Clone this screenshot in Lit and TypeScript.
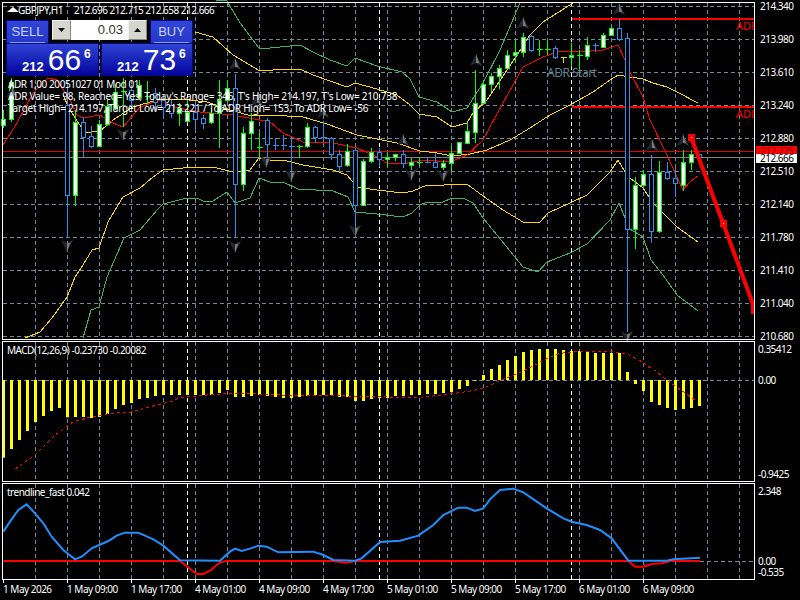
import { LitElement, html, svg, css } from 'lit';
import { customElement } from 'lit/decorators.js';

type Pt = [number, number];
// i, kind (b bull, s bear, g/h/y doji), body top, body bottom, wick top, wick bottom
type Bar = [number, string, number, number, number, number];

const barX = (i: number) => 3.5 + 8 * i;
const pts = (list: Pt[]) => list.map((p) => p.join(',')).join(' ');
const zoomed = (list: Pt[], ox: number, oy: number): Pt[] =>
  list.map(([x, y]) => [ox + x / 3, oy + y / 3] as Pt);

const BARS: Bar[] = [
  [0, 'b', 119, 125, 110, 128], [1, 'b', 82, 119, 78, 122],
  [8, 's', 105, 195, 80, 238], [9, 'b', 122, 195, 110, 206], [10, 's', 122, 137, 117, 157],
  [11, 's', 136, 146, 126, 148], [12, 'b', 124, 146, 120, 147], [13, 'b', 106, 124, 100, 126],
  [14, 'b', 92, 108, 84, 110], [15, 'g', 91, 91, 78, 127], [16, 's', 90, 100, 85, 107],
  [17, 'b', 85, 97, 80, 100], [18, 'g', 96, 96, 81, 104], [19, 's', 93, 102, 88, 110],
  [20, 's', 100, 107, 95, 118], [21, 's', 105, 113, 100, 118], [22, 'b', 108, 113, 103, 126],
  [23, 'b', 112, 121, 100, 123], [24, 's', 112, 119, 103, 131], [25, 's', 118, 123, 115, 129],
  [26, 'b', 113, 122, 108, 124], [27, 'b', 100, 113, 80, 148], [28, 'b', 88, 100, 80, 101],
  [29, 's', 88, 184, 74, 238], [30, 'b', 133, 184, 127, 191], [31, 'b', 121, 133, 113, 150],
  [32, 'g', 147, 147, 133, 157], [33, 's', 120, 144, 118, 157], [34, 'h', 145, 145, 138, 150],
  [35, 'h', 145, 145, 135, 150], [36, 'h', 146, 146, 138, 172], [37, 'g', 146, 146, 145, 157],
  [38, 'b', 127, 146, 123, 148], [39, 's', 127, 137, 126, 143], [40, 'h', 137, 137, 121, 142],
  [41, 's', 138, 154, 137, 160], [42, 's', 154, 166, 150, 172], [43, 'b', 151, 165, 144, 167],
  [44, 's', 150, 205, 148, 227], [45, 'b', 161, 205, 159, 206], [46, 'b', 152, 161, 148, 163],
  [47, 's', 152, 159, 148, 167], [48, 'b', 157, 159, 152, 167], [49, 'b', 154, 157, 154, 161],
  [50, 's', 154, 163, 150, 168], [51, 'b', 162, 165, 158, 170], [52, 'g', 162, 162, 157, 165],
  [53, 'h', 162, 162, 158, 163], [54, 's', 162, 167, 153, 168], [55, 'b', 163, 167, 160, 170],
  [56, 'b', 153, 163, 146, 172], [57, 'b', 142, 153, 142, 154], [58, 'b', 131, 143, 123, 143],
  [59, 'b', 103, 132, 70, 143], [60, 'b', 84, 103, 80, 104], [61, 'b', 76, 84, 73, 92],
  [62, 'b', 68, 76, 65, 89], [63, 'b', 55, 68, 50, 69], [64, 'b', 52, 55, 40, 63],
  [65, 'b', 37, 52, 33, 57], [66, 's', 36, 50, 35, 52], [67, 'g', 49, 49, 40, 56],
  [68, 'g', 49, 49, 40, 55], [69, 's', 48, 57, 46, 59], [70, 'y', 57, 57, 57, 63],
  [71, 'b', 55, 57, 43, 67], [72, 'g', 55, 55, 50, 72], [73, 'b', 45, 56, 37, 60],
  [74, 'h', 45, 45, 43, 52], [75, 'b', 35, 47, 33, 48], [76, 'b', 28, 35, 26, 36],
  [77, 's', 28, 39, 19, 41], [78, 's', 38, 229, 33, 332], [79, 'b', 185, 229, 177, 249],
  [80, 'b', 174, 185, 170, 186], [81, 's', 174, 231, 155, 243], [82, 'b', 172, 231, 161, 233],
  [83, 's', 172, 178, 162, 180], [84, 's', 178, 183, 168, 197], [85, 'b', 162, 185, 150, 191],
  [86, 'b', 154, 162, 150, 170], [87, 's', 154, 157, 154, 158],
];

const GREEN_UP: Pt[] = [[195, -2], [227, 1], [240, 23], [259, 48], [270, 48], [300, 45], [313, 52], [330, 60], [347, 66], [355, 58], [377, 66], [402, 72], [410, 79], [419, 97], [437, 102], [452, 112], [467, 108], [483, 83], [500, 50], [520, 3], [522, 2]];
const YELLOW_UP: Pt[] = [[195, 32], [213, 37], [233, 55], [260, 71], [287, 69], [300, 69], [313, 75], [347, 87], [355, 83], [377, 89], [397, 95], [410, 105], [419, 114], [437, 117], [452, 127], [467, 123], [473, 113], [487, 100], [517, 55], [530, 35], [543, 22], [573, 3]];
const RED_MID: Pt[] = [[3, 145], [17, 123], [33, 93], [48, 78], [57, 80], [70, 100], [77, 115], [83, 118], [100, 115], [113, 123], [123, 127], [140, 107], [160, 100], [173, 107], [200, 112], [233, 115], [270, 122], [283, 133], [303, 142], [333, 143], [357, 148], [377, 157], [387, 163], [407, 163], [423, 160], [450, 162], [467, 155], [483, 140], [503, 103], [523, 67], [543, 57], [560, 51], [580, 52], [603, 50], [618, 45], [625, 60], [630, 72], [643, 97], [650, 120], [667, 155], [677, 177], [683, 190], [690, 182], [698, 176]];
const YELLOW_MID: Pt[] = [[63, 95], [70, 110], [85, 133], [100, 131], [113, 120], [133, 107], [157, 100], [180, 99], [207, 102], [230, 110], [248, 115], [270, 115], [303, 117], [327, 124], [357, 135], [397, 143], [420, 151], [437, 153], [452, 156], [470, 154], [487, 150], [510, 140], [530, 128], [550, 115], [570, 105], [593, 92], [610, 80], [618, 75], [630, 77], [643, 79], [653, 83], [667, 87], [677, 92], [698, 103]];
const YELLOW_LOW: Pt[] = [[25, 338], [40, 332], [52, 318], [67, 297], [75, 277], [83, 265], [92, 250], [99, 248], [108, 222], [123, 197], [140, 188], [153, 177], [163, 170], [193, 167], [213, 167], [233, 172], [250, 170], [259, 158], [270, 160], [287, 161], [303, 165], [333, 170], [347, 175], [357, 187], [377, 190], [403, 193], [413, 191], [427, 185], [437, 186], [452, 184], [467, 184], [483, 196], [503, 210], [523, 222], [540, 222], [548, 213], [570, 203], [587, 195], [610, 172], [618, 160], [625, 172], [630, 178], [643, 188], [653, 203], [663, 213], [677, 227], [698, 242]];
const GREEN_LOW: Pt[] = [[83, 338], [91, 310], [99, 307], [107, 277], [124, 238], [140, 230], [157, 210], [163, 204], [187, 198], [197, 198], [203, 201], [213, 201], [227, 192], [235, 203], [250, 198], [259, 178], [270, 182], [283, 182], [298, 189], [333, 191], [348, 197], [355, 212], [377, 214], [403, 217], [412, 213], [420, 205], [427, 202], [443, 202], [452, 198], [463, 198], [473, 203], [483, 218], [497, 235], [523, 267], [538, 272], [547, 262], [570, 253], [587, 244], [610, 220], [619, 203], [625, 218], [630, 229], [643, 237], [651, 260], [663, 275], [677, 295], [698, 311]];

const ARROWS_UP: Pt[] = [[235, 64], [257, 100], [323, 112], [403, 140], [476, 60], [523, 23], [619, 9], [652, 145], [683, 140], [12, 92]];
const ARROWS_DOWN: Pt[] = [[123, 135], [67, 246], [235, 247], [266, 162], [291, 176], [355, 231], [411, 175], [443, 176], [627, 337]];

// histogram ends in zoomed px of the MACD pane, zero at 120
const MACD_END = [353, 327, 300, 273, 246, 228, 213, 204, 232, 231, 231, 234, 231, 222, 207, 195, 189, 177, 174, 168, 165, 165, 165, 165, 165, 165, 165, 159, 150, 171, 171, 168, 165, 168, 171, 174, 174, 171, 168, 165, 165, 165, 171, 171, 183, 183, 177, 174, 174, 168, 168, 165, 165, 162, 162, 159, 156, 147, 138, 122, 105, 87, 75, 60, 48, 36, 30, 27, 27, 27, 30, 33, 33, 36, 39, 39, 39, 39, 96, 132, 153, 186, 195, 204, 210, 207, 204, 198];
const SIGNAL: Pt[] = [
  ...zoomed([[45, 387], [105, 345], [165, 285], [220, 245], [270, 232], [330, 220], [390, 217], [450, 200], [520, 183], [540, 173], [620, 165], [700, 160], [800, 163], [880, 167], [1000, 167], [1200, 172]], 0, 340),
  ...zoomed([[60, 172], [130, 165], [200, 155], [250, 145], [300, 122], [350, 102], [400, 78], [430, 60], [480, 40], [520, 35], [640, 35], [680, 42], [720, 62], [770, 95], [800, 120], [850, 155], [885, 180]], 400, 340),
];
const TREND_BLUE: Pt[] = [
  ...zoomed([[10, 155], [30, 125], [55, 90], [80, 73], [105, 100], [130, 130], [155, 170], [190, 210], [225, 238], [245, 230], [275, 205], [325, 183], [350, 167], [375, 158], [415, 158], [460, 178], [490, 197], [540, 241], [660, 242], [690, 215], [705, 206], [725, 213], [750, 206], [775, 197], [800, 200], [835, 217], [940, 215], [970, 225], [1000, 240], [1065, 242], [1085, 235], [1140, 186], [1200, 182]], 0, 480),
  ...zoomed([[55, 167], [100, 135], [130, 105], [175, 83], [200, 83], [225, 93], [250, 85], [270, 58], [300, 30], [340, 26], [370, 37], [440, 85], [490, 115], [515, 125], [560, 135], [600, 150], [635, 175], [685, 242], [800, 242], [820, 238], [900, 233]], 400, 480),
];
const TREND_RED: Pt[] = [
  ...zoomed([[10, 243], [540, 243], [590, 282], [610, 282], [630, 272], [660, 247], [680, 243], [995, 243], [1040, 248], [1065, 243]], 0, 480),
  ...zoomed([[685, 243], [705, 260], [730, 260], [755, 252], [785, 250], [810, 243], [900, 243]], 400, 480),
];

const PRICES: [string, number][] = [
  ['214.340', 6], ['213.980', 39], ['213.610', 72], ['213.240', 105], ['212.880', 138], ['212.510', 171],
  ['212.140', 204], ['211.780', 237], ['211.410', 270], ['211.040', 303], ['210.680', 336],
];
const TIMES = ['1 May 2026', '1 May 09:00', '1 May 17:00', '4 May 01:00', '4 May 09:00', '4 May 17:00', '5 May 01:00', '5 May 09:00', '5 May 17:00', '6 May 01:00', '6 May 09:00'];
const GRID_X = Array.from({ length: 24 }, (_, k) => 35 + 32 * k).filter((x) => x < 754);
const SEPARATORS = [187, 379, 571];

function vGrid(top: number, bottom: number) {
  return svg`
    ${GRID_X.map((x) => svg`<line class="grid" x1=${x + 0.5} x2=${x + 0.5} y1=${top} y2=${bottom}></line>`)}
    ${SEPARATORS.map((x) => svg`<line class="sep" x1=${x + 0.5} x2=${x + 0.5} y1=${top} y2=${bottom}></line>`)}`;
}

function frame(top: number, bottom: number) {
  return svg`<rect class="frame" x="2.5" y=${top + 0.5} width="752" height=${bottom - top}></rect>`;
}

function axisLabel(text: string, y: number, x = 760) {
  return svg`<text class="label" x=${x} y=${y + 4}>${text}</text>`;
}

function candle([i, kind, top, bottom, wickTop, wickBottom]: Bar) {
  const x = barX(i);
  const tone = kind === 'b' || kind === 'g' ? 'up' : kind === 'y' ? 'gold' : 'down';
  const wick = svg`<line class="wick ${tone}" x1=${x} x2=${x} y1=${wickTop} y2=${wickBottom}></line>`;
  if (kind === 'b' || kind === 's') {
    const fill = kind === 'b' ? 'bull' : 'bear';
    return svg`${wick}<rect class="body ${tone} ${fill}" x=${x - 2} y=${top + 0.5} width="4" height=${Math.max(bottom - top, 1)}></rect>`;
  }
  return svg`${wick}<line class="wick ${tone}" x1=${x - 3} x2=${x + 3} y1=${top + 0.5} y2=${top + 0.5}></line>`;
}

function arrow([x, y]: Pt, up: boolean) {
  const t = up ? `translate(${x} ${y})` : `translate(${x} ${y}) scale(1 -1)`;
  return svg`<g transform=${t}>
    <polygon class="arrow-dark" points="0,-6 -6,6 0,3"></polygon>
    <polygon class="arrow-wing" points="0,-6 6,6 0,3"></polygon>
    <polygon class="arrow-light" points="0,-6 3,3 0,3"></polygon>
  </g>`;
}

@customElement('trade-panel')
export class TradePanel extends LitElement {
  static styles = css`
    :host {
      position: absolute;
      left: 6px;
      top: 20px;
      width: 187px;
      font-family: 'Liberation Sans', Arial, sans-serif;
    }
    .top {
      display: flex;
      height: 23px;
    }
    .btn {
      width: 43px;
      background: linear-gradient(#3046d8, #2637c8);
      border: 1px solid #000a90;
      border-bottom: none;
      box-sizing: border-box;
      color: #c9d4ff;
      font-size: 13px;
      display: flex;
      align-items: center;
      justify-content: center;
      padding-bottom: 2px;
      position: relative;
    }
    .btn::after {
      content: '';
      position: absolute;
      left: 3px;
      right: 3px;
      bottom: 0;
      height: 1px;
      background: #8a9be6;
    }
    .lots {
      display: flex;
      height: 20px;
      width: 96px;
      margin: 0 3px;
      background: #fff;
      flex: 1;
    }
    .spin {
      width: 19px;
      background: #d6d6d0;
      border: 1px solid #f0f0ec;
      border-right-color: #888;
      border-bottom-color: #888;
      box-sizing: border-box;
      display: flex;
      align-items: center;
      justify-content: center;
    }
    .value {
      flex: 1;
      text-align: right;
      padding-right: 5px;
      font-size: 13px;
      line-height: 20px;
      color: #3a3328;
    }
    .prices {
      display: flex;
      gap: 2px;
    }
    .price {
      width: 93px;
      height: 33px;
      box-sizing: border-box;
      background: linear-gradient(#2f44d6, #04049c);
      border: 1px solid #000a80;
      display: flex;
      align-items: flex-start;
      color: #fff;
      padding-left: 15px;
    }
    .price + .price {
      width: 92px;
    }
    .small {
      font-size: 13px;
      font-weight: bold;
      margin-top: 15px;
    }
    .big {
      font-size: 30px;
      line-height: 30px;
      margin: 1px 3px 0 4px;
    }
    .sup {
      font-size: 12px;
      font-weight: bold;
      margin-top: 3px;
    }
  `;

  private price(big: string) {
    return html`<div class="price">
      <span class="small">212</span><span class="big">${big}</span><span class="sup">6</span>
    </div>`;
  }

  render() {
    return html`
      <div class="top">
        <div class="btn">SELL</div>
        <div class="lots">
          <div class="spin"><svg width="7" height="4"><polygon points="0,0 7,0 3.5,4" fill="#111"></polygon></svg></div>
          <div class="value">0.03</div>
          <div class="spin"><svg width="7" height="4"><polygon points="0,4 7,4 3.5,0" fill="#111"></polygon></svg></div>
        </div>
        <div class="btn">BUY</div>
      </div>
      <div class="prices">${this.price('66')}${this.price('73')}</div>
    `;
  }
}

@customElement('app-root')
export class AppRoot extends LitElement {
  static styles = css`
    :host {
      display: block;
      position: relative;
      width: 800px;
      height: 600px;
      background: #000;
      overflow: hidden;
    }
    .chart {
      display: flex;
      flex-direction: column;
    }
    svg.pane {
      display: block;
      width: 800px;
      overflow: visible;
    }
    .frame {
      fill: none;
      stroke: #fff;
      stroke-width: 1;
      shape-rendering: crispEdges;
    }
    .tick {
      stroke: #fff;
      shape-rendering: crispEdges;
    }
    .grid {
      stroke: #778899;
      stroke-dasharray: 4 3;
      shape-rendering: crispEdges;
    }
    .sep {
      stroke: #fff;
      stroke-dasharray: 4 3;
      shape-rendering: crispEdges;
    }
    .curve {
      fill: none;
      stroke-width: 1;
      shape-rendering: crispEdges;
    }
    .c-green {
      stroke: #3cb371;
    }
    .c-gold {
      stroke: #ffd700;
    }
    .c-red {
      stroke: #f00;
    }
    .adr {
      stroke: #f00;
      stroke-width: 2;
      shape-rendering: crispEdges;
    }
    .price-bid {
      stroke: #e00000;
      shape-rendering: crispEdges;
    }
    .price-ask {
      stroke: #808080;
      shape-rendering: crispEdges;
    }
    .wick {
      shape-rendering: crispEdges;
    }
    .body {
      shape-rendering: crispEdges;
    }
    .up {
      stroke: #0f0;
    }
    .down {
      stroke: #2b8ff0;
    }
    .gold {
      stroke: #ffd700;
    }
    .bull {
      fill: #fff;
    }
    .bear {
      fill: #000;
    }
    .arrow-dark {
      fill: #1f2636;
    }
    .arrow-wing {
      fill: #3a3a3c;
    }
    .arrow-light {
      fill: #7d7b74;
    }
    .drawn {
      fill: none;
      stroke: #f00;
      stroke-width: 4;
    }
    .node {
      fill: #f00;
    }
    .dot {
      fill: #fff;
    }
    text {
      font-family: 'Noto Sans', 'Liberation Sans', sans-serif;
      font-size: 10px;
      letter-spacing: -0.5px;
    }
    .label {
      fill: #fff;
    }
    .adr-name {
      fill: #f00;
      font-size: 11px;
      letter-spacing: 0;
    }
    .adr-start {
      fill: #5f8290;
      font-size: 12px;
    }
    .tag-red {
      fill: #f00;
    }
    .tag-white {
      fill: #fff;
    }
    .tag-text {
      fill: #000;
    }
    .tag-hidden {
      fill: #700;
    }
    .hist {
      fill: #ff0;
    }
    .signal {
      fill: none;
      stroke: #f00;
      stroke-dasharray: 3 3;
      shape-rendering: crispEdges;
    }
    .trend-blue {
      fill: none;
      stroke: #1e90ff;
      stroke-width: 2;
    }
    .trend-red {
      fill: none;
      stroke: #f00;
      stroke-width: 2;
    }
    .zero {
      stroke: #778899;
      stroke-dasharray: 4 3;
      shape-rendering: crispEdges;
    }
  `;

  private renderMain() {
    return html`<svg class="pane" height="340" viewBox="0 0 800 340">
      ${vGrid(3, 339)}
      ${PRICES.map(([, y]) => svg`<line class="grid" x1="3" x2="754" y1=${y + 0.5} y2=${y + 0.5}></line>`)}
      <line class="price-bid" x1="3" x2="754" y1="151.5" y2="151.5"></line>
      <line class="price-ask" x1="3" x2="754" y1="157.5" y2="157.5"></line>
      <polyline class="curve c-green" points=${pts(GREEN_UP)}></polyline>
      <polyline class="curve c-gold" points=${pts(YELLOW_UP)}></polyline>
      <polyline class="curve c-gold" points=${pts(YELLOW_MID)}></polyline>
      <polyline class="curve c-red" points=${pts(RED_MID)}></polyline>
      <polyline class="curve c-gold" points=${pts(YELLOW_LOW)}></polyline>
      <polyline class="curve c-green" points=${pts(GREEN_LOW)}></polyline>
      <line class="adr" x1="572" x2="754" y1="19" y2="19"></line>
      <line class="adr" x1="572" x2="754" y1="107" y2="107"></line>
      ${BARS.map(candle)}
      ${ARROWS_UP.map((p) => arrow(p, true))}
      ${ARROWS_DOWN.map((p) => arrow(p, false))}
      <polyline class="drawn" points="691,137 723,223 753,304 753,314"></polyline>
      <rect class="node" x="688" y="134" width="7" height="7"></rect>
      <rect class="dot" x="691" y="137" width="1" height="1"></rect>
      <rect class="node" x="720" y="220" width="7" height="7"></rect>
      <rect class="dot" x="723" y="223" width="1" height="1"></rect>
      <svg x="730" y="15" width="24" height="110" viewBox="730 15 24 110">
        <text class="adr-name" x="736" y="30">ADR</text>
        <text class="adr-name" x="736" y="118">ADR</text>
      </svg>
      <text class="adr-start" x="547" y="77">ADR Start</text>
      <polygon class="label" points="7,12 13,7 19,12"></polygon>
      <text class="label" x="18" y="14">GBPJPY,H1</text>
      <text class="label" x="74" y="14">212.696 212.715 212.658 212.666</text>
      <text class="label" x="8" y="88" textLength="131">ADR 1,00 20051027 01 Mod 01</text>
      <text class="label" x="8" y="100" textLength="389">ADR Value= 98, Reached= Yes, Today's Range= 346, T's High= 214.197, T's Low= 210.738</text>
      <text class="label" x="8" y="112" textLength="360">Target High= 214.197, Target Low= 213.221 / To ADR High= 153, To ADR Low= -56</text>
      ${PRICES.map(([t, y]) => axisLabel(t, y))}
      <rect class="tag-red" x="756" y="146" width="41" height="9"></rect>
      <text class="tag-hidden" x="760" y="155">212.725</text>
      <rect class="tag-white" x="756" y="154" width="41" height="9"></rect>
      <text class="tag-text" x="760" y="162">212.666</text>
      ${frame(2, 339)}
    </svg>`;
  }

  private renderMacd() {
    return html`<svg class="pane" height="142" viewBox="0 340 800 142">
      ${vGrid(342, 481)}
      <line class="zero" x1="3" x2="754" y1="380.5" y2="380.5"></line>
      ${MACD_END.map((end, i) => {
        const y = 340 + end / 3;
        const top = Math.min(y, 380);
        return svg`<rect class="hist" x=${barX(i) - 1.5} y=${top} width="3" height=${Math.abs(y - 380)}></rect>`;
      })}
      <polyline class="signal" points=${pts(SIGNAL)}></polyline>
      <text class="label" x="7" y="354">MACD(12,26,9) -0.23730 -0.20082</text>
      ${axisLabel('0.35412', 349, 758)}
      ${axisLabel('0.00', 380, 758)}
      ${axisLabel('-0.9425', 474, 758)}
      ${frame(341, 481)}
    </svg>`;
  }

  private renderTrend() {
    return html`<svg class="pane" height="118" viewBox="0 482 800 118">
      ${vGrid(484, 579)}
      <line class="zero" x1="700" x2="754" y1="561.5" y2="561.5"></line>
      <polyline class="trend-red" points=${pts(TREND_RED)}></polyline>
      <polyline class="trend-blue" points=${pts(TREND_BLUE)}></polyline>
      <text class="label" x="7" y="496">trendline_fast 0.042</text>
      ${axisLabel('2.348', 491, 758)}
      ${axisLabel('0.00', 561, 758)}
      ${axisLabel('-0.535', 572, 758)}
      ${TIMES.map(
        (t, i) => svg`
          <line class="tick" x1=${3.5 + 64 * i} x2=${3.5 + 64 * i} y1="580" y2="583"></line>
          <text class="label" x=${3 + 64 * i} y="593">${t}</text>`
      )}
      ${frame(483, 579)}
    </svg>`;
  }

  render() {
    return html`
      <div class="chart">${this.renderMain()}${this.renderMacd()}${this.renderTrend()}</div>
      <trade-panel></trade-panel>
    `;
  }
}

declare global {
  interface HTMLElementTagNameMap {
    'app-root': AppRoot;
    'trade-panel': TradePanel;
  }
}
